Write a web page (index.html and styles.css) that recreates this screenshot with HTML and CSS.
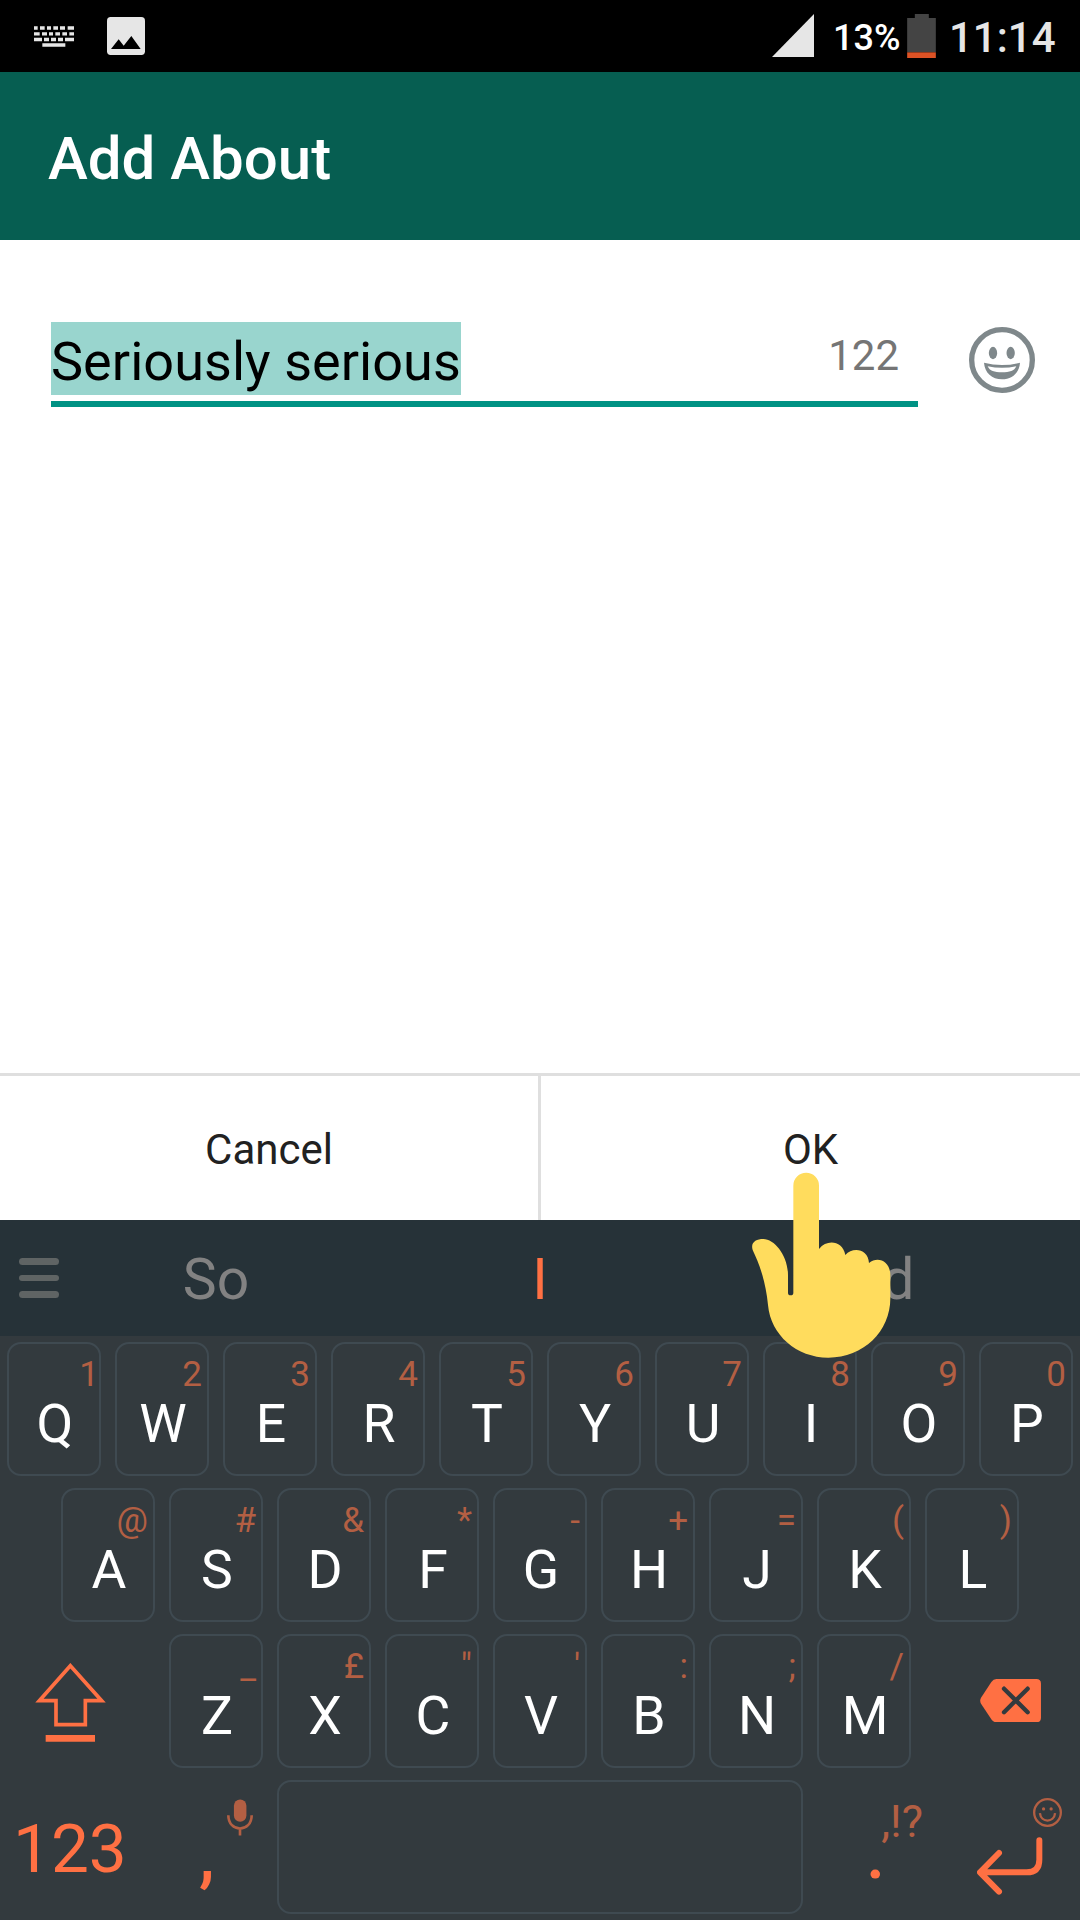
FILE: index.html
```html
<!DOCTYPE html>
<html lang="en">
<head>
<meta charset="utf-8">
<title>Add About</title>
<link rel="stylesheet" href="styles.css">
</head>
<body>
<div class="screen">
  <div class="status">
    <svg class="st-keyboard" viewBox="102 78 120 62"><path d="M102 78h11v11h-11zM120 78h14v11h-14zM141 78h12v11h-12zM160 78h14v11h-14zM180 78h15v11h-15zM203 78h19v11h-19zM102 96h17v10h-17zM126 96h15v10h-15zM147 96h12v10h-12zM166 96h14v10h-14zM187 96h14v10h-14zM208 96h14v10h-14zM102 113h24v10h-24zM132 113h15v10h-15zM153 113h15v10h-15zM174 113h15v10h-15zM195 113h27v10h-27zM127 129h69v11h-69z"/></svg>
    <svg class="st-picture" viewBox="321 51 114 114"><rect x="321" y="51" width="114" height="114" rx="11"/><path class="peaks" d="M333 147l23-29 15 19 23-29 28 39z"/></svg>
    <span class="spacer"></span>
    <svg class="st-signal" viewBox="0 0 42 43"><path d="M0 43L42 0V43z"/></svg>
    <span class="st-percent">13%</span>
    <svg class="st-battery" viewBox="504 42 86 132"><path class="cell" d="M527 42h42v12h21v103h-86V54h23z"/><path class="charge" d="M504 157h86v17h-86z"/></svg>
    <span class="st-time">11:14</span>
  </div>
  <header class="appbar"><h1>Add About</h1></header>
  <main class="form">
    <div class="field">
      <span class="selected">Seriously serious</span>
      <span class="count">122</span>
    </div>
    <svg class="emoji" viewBox="567 81 198 198"><circle class="ring" cx="666" cy="180" r="91"/><ellipse cx="639" cy="159" rx="12.500" ry="18.500"/><ellipse cx="692" cy="159" rx="12.500" ry="18.500"/><path fill-rule="evenodd" d="M612 188Q666 202 720 188C718 218 696 238 666 238S614 218 612 188zM623 199Q666 208 709 199C703 213 689 217 666 217S629 213 623 199z"/></svg>
  </main>
  <div class="actions"><div class="action">Cancel</div><div class="action">OK</div></div>
  <div class="suggestions">
    <div class="menu"><i></i><i></i><i></i></div>
    <span class="word">So</span><span class="word current">I</span><span class="word">And</span>
  </div>
  <div class="keyboard">
    <div class="row">
      <div class="key"><small class="one">1</small><b>Q</b></div><div class="key"><small>2</small><b>W</b></div><div class="key"><small>3</small><b>E</b></div><div class="key"><small>4</small><b>R</b></div><div class="key"><small>5</small><b>T</b></div><div class="key"><small>6</small><b>Y</b></div><div class="key"><small>7</small><b>U</b></div><div class="key"><small>8</small><b>I</b></div><div class="key"><small>9</small><b>O</b></div><div class="key"><small>0</small><b>P</b></div>
    </div>
    <div class="row middle">
      <div class="key"><small>@</small><b>A</b></div><div class="key"><small>#</small><b>S</b></div><div class="key"><small>&amp;</small><b>D</b></div><div class="key"><small>*</small><b>F</b></div><div class="key"><small>-</small><b>G</b></div><div class="key"><small>+</small><b>H</b></div><div class="key"><small>=</small><b>J</b></div><div class="key"><small>(</small><b>K</b></div><div class="key"><small>)</small><b>L</b></div>
    </div>
    <div class="row">
      <div class="side shift"><svg viewBox="104 130 213 237"><path class="arrow" d="M210 138L117 243H167V315H255V243H304z"/><path class="bar" d="M136 346h148v20H136z"/></svg></div>
      <div class="key"><small>_</small><b>Z</b></div><div class="key"><small>£</small><b>X</b></div><div class="key"><small>"</small><b>C</b></div><div class="key"><small>'</small><b>V</b></div><div class="key"><small>:</small><b>B</b></div><div class="key"><small>;</small><b>N</b></div><div class="key"><small>/</small><b>M</b></div>
      <div class="side delete"><svg viewBox="780 178 183 130"><path class="tag" d="M829 178H949Q963 178 963 192V294Q963 308 949 308H829Q820 308 814 299L783 252Q778 243 783 234L814 187Q820 178 829 178z"/><path class="cross" d="M852 207l71 71M923 207l-71 71"/></svg></div>
    </div>
    <div class="row">
      <div class="side numbers">123</div>
      <div class="comma"><svg viewBox="679 538 79 110"><rect x="700" y="538" width="38" height="68" rx="19"/><path class="stand" d="M683 586C683 640 754 640 754 586M718.500 628v20"/></svg><span>,</span></div>
      <div class="key space"></div>
      <div class="period"><small>,!?</small><span>.</span></div>
      <div class="side enter">
        <svg class="smile" viewBox="939 533 88 88"><circle class="line" cx="983" cy="577" r="40.500"/><circle cx="971" cy="566" r="5"/><circle cx="994" cy="566" r="5"/><path class="line" d="M960 579C963 609 1003 609 1006 579"/></svg>
        <svg class="return" viewBox="772 650 198 174"><path d="M959 660V718Q959 756 921 756H782M838 698L781 756L838 814"/></svg>
      </div>
    </div>
  </div>
  <svg class="pointer" viewBox="96 336 417 558"><path d="M220 377a38.500 38.500 0 0 1 77 0V567C322 536 368 543 376 585C398 559 445 566 447 609C474 587 511 604 511 645V715C511 815 430 893 325 893C230 893 152 825 144 735C138 672 122 620 98 570C91 547 108 537 130 537C164 537 204 588 204 645V698a8 8 0 0 0 16 0z"/></svg>
</div>
</body>
</html>
```
FILE: styles.css
```css
* { box-sizing: border-box; }
body { margin: 0; font-family: Roboto, sans-serif; }
svg { display: block; flex: none; }
.screen { position: relative; width: 1080px; height: 1920px; overflow: hidden; background: #fff; display: flex; flex-direction: column; }

.status { height: 72px; background: #000; display: flex; align-items: flex-start; padding: 0 24px 0 34px; font-weight: 500; fill: #e6e6e6; }
.spacer { flex: 1; }
.st-keyboard { width: 40px; height: 21px; margin: 26px 33px 0 0; }
.st-picture { width: 38px; height: 38px; margin-top: 17px; }
.peaks { fill: #000; }
.st-signal { width: 42px; height: 43px; margin: 14px 19px 0 0; }
.st-percent { width: 74px; font-size: 36px; line-height: 76px; color: #fff; }
.st-battery { width: 29px; height: 44px; margin: 14px 13px 0 0; }
.cell { fill: #444; }
.charge { fill: #dc5225; }
.st-time { width: 107px; font-size: 42px; line-height: 75px; color: #e6e6e6; }

.appbar { height: 168px; background: #065e51; padding-left: 48px; }
h1 { margin: 0; font-size: 60px; line-height: 173px; font-weight: 500; color: #fff; }

.form { height: 833px; display: flex; align-items: flex-start; padding: 82px 45px 0 51px; }
.field { width: 867px; height: 85px; border-bottom: 6px solid #009284; display: flex; justify-content: space-between; align-items: flex-start; padding-right: 19px; }
.selected { height: 73px; background: #99d5ce; color: #000; font-size: 54px; line-height: 79px; letter-spacing: .05px; white-space: nowrap; }
.count { font-size: 42px; line-height: 67px; color: #757575; }
.emoji { width: 66px; height: 66px; margin: 5px 0 0 51px; fill: #7f888b; }
.ring { fill: none; stroke: #7f888b; stroke-width: 16; }

.actions { height: 147px; border-top: 3px solid #dfdfdf; display: flex; }
.action { flex: 1; text-align: center; font-size: 42px; line-height: 147px; color: #212121; }
.action:first-child { flex: 0 0 541px; border-right: 3px solid #dfdfdf; }

.suggestions { height: 116px; background: #263238; display: flex; }
.menu { width: 54px; padding: 38px 0 0 19px; display: flex; flex-direction: column; gap: 10px; }
.menu i { width: 40px; height: 6.670px; border-radius: 4px; background: #5f6464; }
.word { width: 324px; text-align: center; font-size: 57px; line-height: 120px; color: #828282; }
.current { color: #ff7043; }

.keyboard { flex: 1; background: #333a3e; padding: 6px 7px; display: flex; flex-direction: column; gap: 12px; color: #ff7043; fill: #ff7043; }
.row { height: 134px; display: flex; gap: 14px; }
.middle { padding-left: 54px; }
.key { width: 94px; border: 2px solid #3f4a51; border-radius: 14px; }
.key small { display: block; height: 60px; padding-right: 5px; text-align: right; font-size: 35px; line-height: 62px; color: #b35f43; }
.key .one { padding-right: 0; }
.key b { display: block; padding-left: 2px; text-align: center; font-size: 53.500px; line-height: 40px; font-weight: 400; color: #fff; }
.side { width: 148px; }
.shift { padding: 29px 0 0 28px; }
.shift svg { width: 71px; height: 79px; }
.arrow { fill: none; stroke: #ff7043; stroke-width: 11; }
.delete { padding: 45px 0 0 55px; }
.delete svg { width: 61px; height: 43.300px; }
.cross { fill: none; stroke: #333a3e; stroke-width: 13; stroke-linecap: round; }
.numbers { padding-left: 6px; font-size: 67.500px; line-height: 137px; }
.comma { width: 94px; padding: 19px 10px 0 0; display: flex; flex-direction: column; align-items: flex-end; fill: #b35f43; }
.comma svg { width: 26px; height: 37px; }
.stand { fill: none; stroke: #b35f43; stroke-width: 8; }
.comma span { width: 54px; font-size: 70px; line-height: 38px; font-weight: 500; }
.space { width: 526px; }
.period { width: 108px; margin-right: -14px; padding-right: 2px; display: flex; flex-direction: column; }
.period small { font-size: 45px; line-height: 83px; text-align: right; color: #b35f43; }
.period span { padding-left: 49px; font-size: 69px; line-height: 0; margin-top: -8px; font-weight: 500; }
.enter { padding-top: 18px; }
.smile { width: 29px; height: 29px; margin-left: 108px; fill: #b35f43; }
.line { fill: none; stroke: #b35f43; stroke-width: 7; }
.return { width: 66px; height: 58px; margin: 10px 0 0 52px; fill: none; stroke: #ff7043; stroke-width: 18; stroke-linecap: round; stroke-linejoin: round; }

/* Pointing hand floats over the OK button and the keyboard */
.pointer { position: absolute; left: 752px; top: 1172px; width: 139px; height: 186px; fill: #ffdc5d; }
```
